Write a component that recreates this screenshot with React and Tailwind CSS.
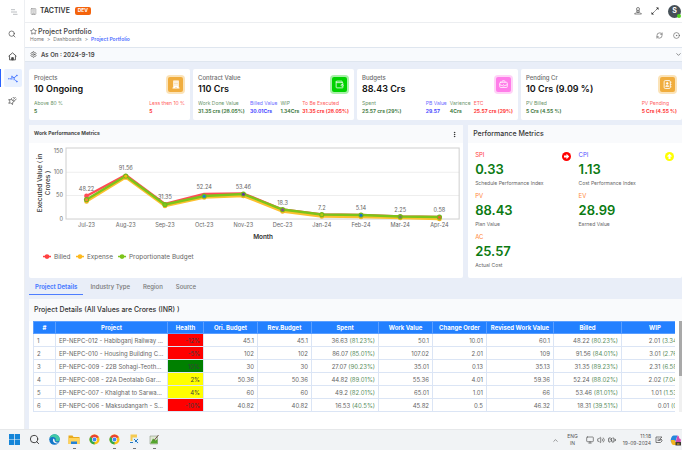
import { useState } from "react";
import {
    BatteryCharging,
    BriefcaseBusiness,
    Building,
    ChevronDown,
    ChevronUp,
    CircleDot,
    EllipsisVertical,
    Monitor,
    RefreshCw,
    Search,
    Settings,
    Star,
    Volume2,
    Wallet,
} from "lucide-react";

const GREEN = "text-[#3f7a43]";
const BLUE = "text-[#4646ff]";
const RED = "text-[#ff3434]";

function TowerIcon() {
    return (
        <svg viewBox="0 0 16 18" className="h-[9px] w-[8px]">
            <path d="M2.500 1h11v14H15v2H1v-2h1.500z" fill="#fff" />
            <path d="M5 4h2M9 4h2M5 7h2M9 7h2M5 10h2M9 10h2M7 15h2" stroke="#f0ad3e" strokeWidth="1.500" />
        </svg>
    );
}

function ContactBookIcon() {
    return (
        <svg viewBox="0 0 16 16" className="h-[9px] w-[9px]" fill="none" stroke="#fff" strokeWidth="1.500">
            <rect x="2" y="1" width="11" height="14" rx="2" />
            <path d="M13 4h2M13 8h2M13 12h2M4.800 11.500c.5-3 5-3 5.500 0z" />
            <circle cx="7.500" cy="6" r="1.500" fill="#fff" />
        </svg>
    );
}

function WalletIcon() {
    return <Wallet size={9} />;
}

function BriefcaseIcon() {
    return <BriefcaseBusiness size={9} />;
}

const cards = [
    {
        title: "Projects",
        value: "10 Ongoing",
        Icon: TowerIcon,
        badge: "bg-[#f0ad3e] ring-[#fbe3b8]",
        stats: [
            { label: "Above 80 %", value: "5", color: GREEN },
            { label: "Less then 10 %", value: "5", color: RED },
        ],
    },
    {
        title: "Contract Value",
        value: "110 Crs",
        Icon: WalletIcon,
        badge: "bg-[#00d200] ring-[#a9f0a9]",
        stats: [
            { label: "Work Done Value", value: "31.35 crs (28.05%)", color: GREEN },
            { label: "Billed Value", value: "30.01Crs", color: BLUE },
            { label: "WIP", value: "1.34Crs", color: GREEN },
            { label: "To Be Executed", value: "31.35 crs (28.05%)", color: RED },
        ],
    },
    {
        title: "Budgets",
        value: "88.43 Crs",
        Icon: BriefcaseIcon,
        badge: "bg-[#ff7de9] ring-[#ffd3f7]",
        stats: [
            { label: "Spent", value: "25.57 crs (29%)", color: GREEN },
            { label: "PB Value", value: "29.57", color: BLUE },
            { label: "Varience", value: "4Crs", color: GREEN },
            { label: "ETC", value: "25.57 crs (29%)", color: RED },
        ],
    },
    {
        title: "Pending Cr",
        value: "10 Crs (9.09 %)",
        Icon: ContactBookIcon,
        badge: "bg-[#f0ad3e] ring-[#fbe3b8]",
        stats: [
            { label: "PV Billed", value: "5 Crs (4.55 %)", color: GREEN },
            { label: "PV Pending", value: "5 Crs (4.55 %)", color: RED },
        ],
    },
];

const months = [
    { name: "Jul-23", value: "48.22", billed: 53, expense: 58.5, budget: 56.5, dot: "#f58634" },
    { name: "Aug-23", value: "91.56", billed: 32, expense: 34.5, budget: 33, dot: "#f5b70a" },
    { name: "Sep-23", value: "31.35", billed: 61, expense: 63, budget: 61.5, dot: "#7fc41c" },
    { name: "Oct-23", value: "52.24", billed: 51, expense: 54.5, budget: 53, dot: "#1583d8" },
    { name: "Nov-23", value: "53.46", billed: 50.5, expense: 53, budget: 51, dot: "#5d3a9b" },
    { name: "Dec-23", value: "18.3", billed: 66.5, expense: 68.5, budget: 66.5, dot: "#8b4a8b" },
    { name: "Jan-24", value: "7.2", billed: 71.5, expense: 73.5, budget: 71.5, dot: "#b9c70d" },
    { name: "Feb-24", value: "5.14", billed: 72, expense: 74, budget: 72, dot: "#1573d0" },
    { name: "Mar-24", value: "2.25", billed: 73.5, expense: 75, budget: 73.5, dot: "#7a7a5a" },
    { name: "Apr-24", value: "0.58", billed: 74, expense: 76, budget: 74, dot: "#e0662a" },
];

const metrics = [
    { code: "SPI", value: "0.33", label: "Schedule Performance Index", color: "text-[#ff3b3b]", arrow: "right" },
    { code: "CPI", value: "1.13", label: "Cost Performance Index", color: "text-[#5252ff]", arrow: "up" },
    { code: "PV", value: "88.43", label: "Plan Value", color: "text-[#ff8a3c]" },
    { code: "EV", value: "28.99", label: "Earned Value", color: "text-[#ff8a3c]" },
    { code: "AC", value: "25.57", label: "Actual Cost", color: "text-[#ff8a3c]" },
];

const tabs = ["Project Details", "Industry Type", "Region", "Source"];

const columns = [
    { name: "#", width: "w-[22px]" },
    { name: "Project", width: "w-[112px]" },
    { name: "Health", width: "w-[36px]" },
    { name: "Ori. Budget", width: "w-[54px]" },
    { name: "Rev.Budget", width: "w-[54px]" },
    { name: "Spent", width: "w-[67px]" },
    { name: "Work Value", width: "w-[54px]" },
    { name: "Change Order", width: "w-[54px]" },
    { name: "Revised Work Value", width: "w-[67px]" },
    { name: "Billed", width: "w-[68px]" },
    { name: "WIP", width: "w-[67px]" },
];

const projects = [
    { name: "EP-NEPC-012 - Habibganj Railway Station", health: "-12%", tone: "bg-[#ff0000]", ori: "45.1", rev: "45.1", spent: ["36.63", "(81.23%)"], work: "50.1", change: "10.01", revised: "60.1", billed: ["48.22", "(80.23%)"], wip: ["2.01", "(3.34%)"] },
    { name: "EP-NEPC-010 - Housing Building Complex", health: "-5%", tone: "bg-[#ff0000]", ori: "102", rev: "102", spent: ["86.07", "(85.01%)"], work: "107.02", change: "2.01", revised: "109", billed: ["91.56", "(84.01%)"], wip: ["3.01", "(2.76%)"] },
    { name: "EP-NEPC-009 - 22B Sohagi-Teothar Road", health: "10%", tone: "bg-[#008000]", ori: "30", rev: "30", spent: ["27.07", "(90.23%)"], work: "35.01", change: "0.13", revised: "35.13", billed: ["31.35", "(89.23%)"], wip: ["2.31", "(6.58%)"] },
    { name: "EP-NEPC-008 - 22A Deotalab Garh Road", health: "2%", tone: "bg-[#ffff00]", ori: "50.36", rev: "50.36", spent: ["44.82", "(89.01%)"], work: "55.36", change: "4.01", revised: "59.36", billed: ["52.24", "(88.02%)"], wip: ["2.02", "(7.04%)"] },
    { name: "EP-NEPC-007 - Khalghat to Sarwardewla", health: "4%", tone: "bg-[#ffff00]", ori: "60", rev: "60", spent: ["49.2", "(82.01%)"], work: "65.01", change: "1.01", revised: "66", billed: ["53.46", "(81.01%)"], wip: ["1.01", "(1.53%)"] },
    { name: "EP-NEPC-006 - Maksudangarh - Sironj", health: "-10%", tone: "bg-[#ff0000]", ori: "40.82", rev: "40.82", spent: ["16.53", "(40.5%)"], work: "45.82", change: "0.5", revised: "46.32", billed: ["18.31", "(39.51%)"], wip: ["0.01", "(0%)"] },
];

function Sidebar() {
    const item = "flex h-[18px] w-[18px] items-center justify-center rounded-[2px]";
    return (
        <nav className="flex w-[25px] shrink-0 flex-col items-center border-r border-[#edeff2] bg-white text-[#444]">
            <button className="flex h-[23px] w-full items-center justify-center" aria-label="Toggle menu">
                <svg viewBox="0 0 8 6" className="ml-1 h-[6px] w-[8px]" stroke="#a9adb3" strokeWidth="0.8">
                    <path d="M1 .7h4M1 3h6M3 5.3h4.5" />
                </svg>
            </button>
            <div className="flex w-full flex-col items-center gap-[4px] pt-[2px]">
                <button className={item} aria-label="Search"><Search size={8} /></button>
                <button className={item} aria-label="Home">
                    <svg viewBox="0 0 16 16" className="h-[9px] w-[9px]" fill="none" stroke="currentColor" strokeWidth="1.5">
                        <path d="M1 7.5 8 1.5l7 6M2.8 6.5V14h10.4V6.5" />
                        <path d="M6.500 14v-4h3v4z" fill="currentColor" />
                    </svg>
                </button>
                <div className="flex w-full items-center border-l border-[#2962ff] pl-[3px]">
                    <button className={item + " bg-[#e9f1ff] text-[#2962ff]"} aria-label="Dashboards">
                        <svg viewBox="0 0 18 18" className="h-[10px] w-[10px]" fill="none" stroke="currentColor" strokeWidth="1.500">
                            <path d="M3 10.500h2.500M7 5v7M7 6.500l4 2V13M11 8.500l4-3M12.500 12l3 3" />
                            <circle cx="16" cy="4.500" r=".8" />
                            <circle cx="16" cy="15.500" r=".8" />
                            <circle cx="1.500" cy="10.500" r=".5" />
                        </svg>
                    </button>
                </div>
                <button className={item} aria-label="Insights">
                    <svg viewBox="0 0 18 18" className="h-[9px] w-[9px]" fill="none" stroke="currentColor" strokeWidth="1.4">
                        <path d="m7 5 1.5 4 4.5 1-3.5 2.5L9 17l-3.5-3-4 .5L3.5 11 1.5 7l4 .8z" />
                        <path d="m11 7 4-5M13 9l4-3M10 4l1-2" />
                    </svg>
                </button>
            </div>
        </nav>
    );
}

function TopBar() {
    return (
        <header className="flex h-[23px] items-center border-b border-[#eceef1] bg-white pr-px pl-[5px] text-[#444]">
            <Building size={7} className="text-[#888]" />
            <span className="ml-[3px] text-[7px] font-semibold text-[#333]">TACTIVE</span>
            <span className="ml-[5px] flex h-[8px] w-[16px] items-center justify-center rounded-[2px] bg-[#f4630c] text-[5px] font-bold text-white">DEV</span>
            <div className="ml-auto flex items-center gap-[9px]">
                <svg viewBox="0 0 16 16" className="h-[8px] w-[8px]" fill="none" stroke="currentColor" strokeWidth="1.300">
                    <circle cx="8" cy="4" r="3" />
                    <path d="M5.500 6.500V11h5V6.500M8 7v4M4 11l-3 3h14l-3-3" />
                </svg>
                <svg viewBox="0 0 16 16" className="h-[8px] w-[8px]" stroke="#222" strokeWidth="1.300">
                    <path d="M3 13 13 3" strokeDasharray="4 1" />
                    <path d="M10 1h5v5zM1 10v5h5z" fill="#222" stroke="none" />
                </svg>
                <span className="relative flex h-[13px] w-[13px] items-center justify-center rounded-full bg-[#465057] text-[7px] font-bold text-white">
                    S
                    <span className="absolute right-0 bottom-0 h-[4px] w-[4px] rounded-full bg-[#52d81c]" />
                </span>
            </div>
        </header>
    );
}

function PageTitle() {
    return (
        <>
            <div className="flex h-[24px] items-center justify-between bg-white pr-[2px] pl-[5px]">
                <div>
                    <h1 className="flex items-center gap-px text-[7px] leading-[8px] font-medium text-[#3d3d3d]">
                        <Star size={7} />
                        Project Portfolio
                    </h1>
                    <div className="flex gap-[3px] text-[5px] leading-[7px] text-[#777]">
                        <a href="#home">Home</a>
                        <span>&gt;</span>
                        <a href="#dashboards">Dashboards</a>
                        <span>&gt;</span>
                        <a href="#portfolio" className="font-semibold text-[#4d6bff]">Project Portfolio</a>
                    </div>
                </div>
                <div className="flex items-center gap-[10px] text-[#555]">
                    <RefreshCw size={7} />
                    <CircleDot size={7} />
                </div>
            </div>
            <div className="flex h-[15px] items-center border-y border-[#dfe6ef] bg-[#f8fafd] pl-[5px] text-[#444]">
                <Settings size={7} />
                <span className="ml-[4px] text-[6px] font-semibold">As On : 2024-9-19</span>
                <ChevronDown size={7} className="ml-auto" />
            </div>
        </>
    );
}

function StatCard({ title, value, Icon, badge, stats }) {
    return (
        <section className="flex h-[51px] min-w-0 flex-col justify-between rounded-[2px] bg-white px-[5px] pt-[5px] pb-[5px]">
            <div className="flex justify-between">
                <div>
                    <h2 className="text-[6px] leading-[8px] font-medium text-[#6b6b6b]">{title}</h2>
                    <p className="text-[9px] leading-[14px] font-semibold text-[#111]">{value}</p>
                </div>
                <div className={"mt-[3px] mr-[2px] flex h-[15px] w-[15px] items-center justify-center rounded-[2px] text-white ring-2 " + badge}>
                    <Icon />
                </div>
            </div>
            <div className="flex gap-[3px] text-[5px] leading-[8px] whitespace-nowrap">
                {stats.map((s, i) => (
                    <div key={s.label} className={s.color + (i === 1 ? " ml-auto" : "")}>
                        <div className="opacity-80">{s.label}</div>
                        <div className="font-bold">{s.value}</div>
                    </div>
                ))}
            </div>
        </section>
    );
}

const px = (i) => 57.5 + i * 39.2;
const line = (key) => months.map((m, i) => `${px(i)},${m[key]}`).join(" ");

function PerformanceChart() {
    return (
        <svg viewBox="0 0 434 135" className="block w-full" fontSize="5.6" fill="#666">
            <g stroke="#eeeeee">
                <path d="M37 29.2h393M37 52.6h393" />
            </g>
            <rect x="37" y="5" width="393" height="71" fill="none" stroke="#cfcfcf" />
            <g textAnchor="end">
                <text x="34" y="10">150</text>
                <text x="34" y="31">100</text>
                <text x="34" y="54">50</text>
                <text x="34" y="78">0</text>
            </g>
            <g transform="rotate(-90)" textAnchor="middle" fontSize="6.4" fontWeight="500" fill="#333">
                <text x="-40" y="13">Executed Value ( in</text>
                <text x="-40" y="21">Crores )</text>
            </g>
            <g fill="none" strokeWidth="2.4" strokeLinejoin="round">
                <polyline points={line("billed")} stroke="#ff4d55" />
                <polyline points={line("expense")} stroke="#fdc12e" />
                <polyline points={line("budget")} stroke="#7cc41a" />
            </g>
            {months.map((m, i) => (
                <g key={m.name} textAnchor="middle">
                    {i === 0 && <circle cx={px(i)} cy={m.billed} r="2.4" fill="#ff4d55" />}
                    <circle cx={px(i)} cy={m.expense} r="2.3" fill="#eeb51f" />
                    <circle cx={px(i)} cy={m.budget} r="2.6" fill="#72b81b" />
                    <circle cx={px(i)} cy={m.budget + 0.3} r="1.5" fill={m.dot} />
                    <text x={px(i)} y={m.billed - 5}>{m.value}</text>
                    <text x={px(i)} y="84">{m.name}</text>
                </g>
            ))}
            <text x="234" y="96" textAnchor="middle" fontSize="6.4" fontWeight="600" fill="#333">Month</text>
            <g fontSize="6.4">
                <path d="M14 113.500h8" stroke="#ff4141" strokeWidth="1.500" />
                <circle cx="18" cy="113.500" r="2.400" fill="#ff4141" />
                <text x="25" y="116">Billed</text>
                <path d="M47 113.500h8" stroke="#fdb91e" strokeWidth="1.500" />
                <circle cx="51" cy="113.500" r="2.400" fill="#fdb91e" />
                <text x="58" y="116">Expense</text>
                <path d="M89 113.500h8" stroke="#7cc41a" strokeWidth="1.500" />
                <circle cx="93" cy="113.500" r="2.400" fill="#7cc41a" />
                <text x="100" y="116">Proportionate Budget</text>
            </g>
        </svg>
    );
}

function ArrowBadge({ direction }) {
    const right = direction === "right";
    return (
        <svg viewBox="0 0 18 18" className="mt-[2px] h-[9px] w-[9px]">
            <circle cx="9" cy="9" r="9" fill={right ? "#ff0000" : "#ffff00"} />
            <path
                d="M9 3.500 14.500 9 9 14.500V11H4V7h5z"
                fill="#fff"
                transform={right ? undefined : "rotate(-90 9 9)"}
            />
        </svg>
    );
}

function Metrics() {
    return (
        <section className="min-w-0 flex-[33] rounded-[2px] bg-white">
            <h2 className="flex h-[18px] items-center bg-[#f9fafc] px-[5px] text-[7px] font-medium text-[#333]">Performance Metrics</h2>
            <div className="grid grid-cols-2 pt-[7px] pl-[7px]">
                {metrics.map((m) => (
                    <div key={m.code} className="flex h-[41px] justify-between pr-[8px]">
                        <div>
                            <div className={"text-[6px] leading-[9px] " + m.color}>{m.code}</div>
                            <div className="text-[13px] leading-[20px] font-semibold text-[#0b7a12]">{m.value}</div>
                            <div className="text-[5px] leading-[8px] whitespace-nowrap text-[#666]">{m.label}</div>
                        </div>
                        {m.arrow && <ArrowBadge direction={m.arrow} />}
                    </div>
                ))}
            </div>
        </section>
    );
}

function Amount({ pair }) {
    return (
        <>
            {pair[0]} <span className="text-[#5b8f5f]">{pair[1]}</span>
        </>
    );
}

function ProjectTable() {
    const num = "border border-[#dbe5f5] pr-[3px] text-right";
    return (
        <div className="ml-[4px] flex">
            <div className="min-w-0 flex-1 overflow-hidden">
                <table className="w-full min-w-[655px] table-fixed border-collapse text-[6px] leading-[7px] whitespace-nowrap text-[#666]">
                    <thead>
                        <tr className="h-[12px] bg-[#2380ff] text-white">
                            {columns.map((c) => (
                                <th key={c.name} className={c.width + " border border-[#5b9fff] text-center font-bold"}>{c.name}</th>
                            ))}
                        </tr>
                    </thead>
                    <tbody>
                        {projects.map((p, i) => (
                            <tr key={p.name} className="h-[13px]">
                                <td className="border border-[#dbe5f5] pl-[3px]">{i + 1}</td>
                                <td className="truncate border border-[#dbe5f5] px-[3px]">{p.name}</td>
                                <td className={num + " text-[#3d3d3d] " + p.tone}>{p.health}</td>
                                <td className={num}>{p.ori}</td>
                                <td className={num}>{p.rev}</td>
                                <td className={num}><Amount pair={p.spent} /></td>
                                <td className={num}>{p.work}</td>
                                <td className={num}>{p.change}</td>
                                <td className={num}>{p.revised}</td>
                                <td className={num}><Amount pair={p.billed} /></td>
                                <td className={num}><Amount pair={p.wip} /></td>
                            </tr>
                        ))}
                    </tbody>
                </table>
            </div>
            <div className="ml-[4px] w-[3px] bg-[#f0f0f0]">
                <div className="h-[55px] bg-[#a9a9a9]" />
            </div>
        </div>
    );
}

function ChromeIcon() {
    return (
        <svg viewBox="0 0 22 22" className="h-[11px] w-[11px]">
            <circle cx="11" cy="11" r="10" fill="#fbc116" />
            <path d="M11 11 2.300 6A10 10 0 0 1 19.700 6z" fill="#ea4335" />
            <path d="M11 11 2.300 6A10 10 0 0 0 11 21z" fill="#2da94f" />
            <circle cx="11" cy="11" r="5" fill="#fff" />
            <circle cx="11" cy="11" r="3.800" fill="#4285f4" />
        </svg>
    );
}

function TaskItem({ label, open, children }) {
    return (
        <button aria-label={label} className="flex h-[15px] w-[12px] flex-col items-center justify-between">
            {children}
            {open && <span className="h-px w-[3px] bg-[#777]" />}
        </button>
    );
}

function Taskbar() {
    return (
        <footer className="flex h-[21px] shrink-0 items-center border-t border-[#e6e8ea] bg-[#f1f3f5] pr-px pl-[8px] text-[#555]">
            <div className="flex gap-[8px] pt-[2px]">
                <TaskItem label="Start">
                    <svg viewBox="0 0 22 22" className="h-[11px] w-[11px]" fill="#1585d8">
                        <path d="M0 0h10.300v10.300H0zM11.700 0H22v10.300H11.700zM0 11.700h10.300V22H0zM11.700 11.700H22V22H11.700z" />
                    </svg>
                </TaskItem>
                <TaskItem label="Search"><Search size={11} className="text-[#333]" /></TaskItem>
                <TaskItem label="Edge">
                    <svg viewBox="0 0 22 22" className="h-[11px] w-[11px]">
                        <circle cx="11" cy="11" r="10.500" fill="#1377c9" />
                        <path d="M1 9C3-3 21-2 21.500 10c0 5-7 6-8.500 3 2-4-1-7-5-7-3 0-6 1-7 3z" fill="#42c9a5" />
                        <path d="M9 9c-3 4 0 10 7 10 2 0 3-1 4-2-3 1-9 0-9-6z" fill="#f1f3f5" />
                    </svg>
                </TaskItem>
                <TaskItem label="File Explorer" open>
                    <svg viewBox="0 0 24 22" className="h-[11px] w-[12px]">
                        <path d="M1 3h8l2 3h12v14H1z" fill="#e8a91a" />
                        <path d="M1 8h22v12H1z" fill="#ffd35a" />
                        <path d="M6 15h12v5H6z" fill="#2582d8" />
                    </svg>
                </TaskItem>
                <TaskItem label="Chrome"><ChromeIcon /></TaskItem>
                <TaskItem label="Chrome work profile" open><ChromeIcon /></TaskItem>
                <TaskItem label="Snipping" open>
                    <svg viewBox="0 0 22 22" className="h-[11px] w-[11px]">
                        <path d="M3 1h13v13H3z" fill="#f4ca52" />
                        <path d="M7 7h13v13H7z" fill="#e4f0fa" />
                        <path d="m10 10 8 8M18 10l-6 6M2 17h6" stroke="#2878c0" strokeWidth="2" />
                    </svg>
                </TaskItem>
                <TaskItem label="Notepad++" open>
                    <svg viewBox="0 0 22 22" className="h-[11px] w-[11px]">
                        <path d="M2 4h15v16H2z" fill="#dfe8d2" stroke="#788570" />
                        <path d="M3 18 8 9l5 4 4-3v9H3z" fill="#54a52d" />
                        <path d="m10 13 9-11" stroke="#6c5546" strokeWidth="2" />
                    </svg>
                </TaskItem>
            </div>
            <div className="ml-auto flex items-center text-[5px] leading-[7px]">
                <ChevronUp size={7} />
                <div className="ml-[8px] text-center">ENG<br />IN</div>
                <div className="ml-[8px] flex items-center gap-[3px]">
                    <Monitor size={8} />
                    <Volume2 size={8} />
                    <BatteryCharging size={8} className="text-[#222]" />
                </div>
                <div className="ml-[7px] text-right">11:18<br />19-09-2024</div>
                <svg viewBox="0 0 16 16" className="ml-[4px] h-[8px] w-[8px]" fill="none" stroke="currentColor" strokeWidth="1.500">
                    <path d="M9 2H2v11h9l3-3V8M5 6h4M5 9h6M9 2h5l-5 5h5" />
                </svg>
                <svg viewBox="0 0 22 22" className="ml-[7px] h-[11px] w-[11px]">
                    <path d="M7 1h8l-5 14H3c-4-2 0-14 4-14z" fill="#2586dd" />
                    <path d="M15 1c4 0 2 7 6 7 2 4-1 12-5 12l-5-5z" fill="#d14bb3" />
                    <path d="M2 10h7l5 10H7c-4 0-5-6-5-10z" fill="#f3b51e" />
                    <path d="M11 14h11v7H11z" fill="#3f3a32" />
                    <path d="M14 18h5" stroke="#f3b51e" strokeWidth="2" />
                </svg>
            </div>
        </footer>
    );
}

export default function App() {
    const [activeTab, setActiveTab] = useState(tabs[0]);

    return (
        <div className="flex min-h-screen flex-col bg-[#e9eef8] font-['Inter','Liberation_Sans',sans-serif]">
            <div className="flex flex-1">
                <Sidebar />
                <main className="flex min-w-0 flex-1 flex-col">
                    <TopBar />
                    <PageTitle />
                    <div className="flex flex-1 flex-col pt-[7px] pl-[4px]">
                        <div className="grid grid-cols-4 gap-[3px]">
                            {cards.map((c) => (
                                <StatCard key={c.title} {...c} />
                            ))}
                        </div>

                        <div className="mt-[5px] flex gap-[5px]">
                            <section className="min-w-0 flex-[67] rounded-[2px] bg-white">
                                <div className="flex h-[18px] items-center justify-between bg-[#f9fafc] px-[5px]">
                                    <h2 className="text-[5px] font-bold text-[#444]">Work Performance Metrics</h2>
                                    <button aria-label="Chart options"><EllipsisVertical size={7} /></button>
                                </div>
                                <PerformanceChart />
                            </section>
                            <Metrics />
                        </div>

                        <div role="tablist" className="flex h-[17px] gap-px text-[6px] text-[#777]">
                            {tabs.map((t) => (
                                <button
                                    key={t}
                                    role="tab"
                                    aria-selected={t === activeTab}
                                    onClick={() => setActiveTab(t)}
                                    className={"border-b px-[6px] " + (t === activeTab ? "border-[#4d7dff] font-bold text-[#4d7dff]" : "border-transparent font-medium")}
                                >
                                    {t}
                                </button>
                            ))}
                        </div>

                        <section className="mt-[4px] flex-1 bg-white">
                            <h2 className="flex h-[22px] items-center bg-[#f9fafc] px-[5px] text-[7px] font-medium text-[#333]">
                                Project Details (All Values are Crores (INR) )
                            </h2>
                            <ProjectTable />
                        </section>
                    </div>
                </main>
            </div>
            <Taskbar />
        </div>
    );
}
